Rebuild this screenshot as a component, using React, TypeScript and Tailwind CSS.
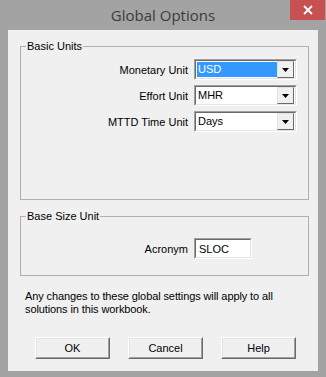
import React from 'react'

const font = { fontFamily: 'Tahoma, "Liberation Sans", Arial, sans-serif' }

function Combo({ value, selected }: { value: string; selected?: boolean }) {
  return (
    <div className="w-[103px] h-[21px] border border-t-[#a0a0a0] border-l-[#a0a0a0] border-b-white border-r-white">
      <div className="h-full flex items-center bg-white border border-t-[#696969] border-l-[#696969] border-b-[#e3e3e3] border-r-[#e3e3e3] pl-[1px] pr-[1px]">
        <div
          className={
            'flex-1 h-[15px] leading-[15px] pl-[1px] ' +
            (selected ? 'bg-[#3399ff] text-white' : 'text-black')
          }
        >
          {value}
        </div>
        <div className="w-[17px] h-[17px] flex items-center justify-center bg-[#f0f0f0] border border-t-[#e3e3e3] border-l-[#e3e3e3] border-b-[#696969] border-r-[#696969]">
          <svg width="7" height="4" viewBox="0 0 7 4">
            <path d="M0 0h7L3.5 4z" fill="#000" />
          </svg>
        </div>
      </div>
    </div>
  )
}

function Row({ label, children }: { label: string; children: React.ReactNode }) {
  return (
    <div className="flex items-center h-[21px]">
      <div className="w-[173px] text-right pr-[6px]">{label}</div>
      {children}
    </div>
  )
}

function Button({ label }: { label: string }) {
  return (
    <div className="w-[75px] h-[22px] border border-t-white border-l-white border-b-[#696969] border-r-[#696969]">
      <div className="h-full flex items-center justify-center bg-[#f0f0f0] border border-t-[#e3e3e3] border-l-[#e3e3e3] border-b-[#a0a0a0] border-r-[#a0a0a0] text-black">
        {label}
      </div>
    </div>
  )
}

export default function App() {
  return (
    <div className="w-[326px] h-[377px] bg-[#a3a3a3] flex flex-col relative" style={font}>
      {/* Title bar */}
      <div className="h-[30px] flex items-center justify-center">
        <span
          className="text-[15px] text-[#3c3c3c] leading-none"
          style={{ fontFamily: '"Segoe UI", "Open Sans", "Noto Sans", sans-serif' }}
        >
          Global Options
        </span>
      </div>
      <div className="absolute top-0 right-[1px] w-[35px] h-[20px] bg-[#c75050] flex items-center justify-center">
        <svg width="10" height="10" viewBox="0 0 10 10">
          <path d="M1 1L9 9M9 1L1 9" stroke="#fff" strokeWidth="1.8" />
        </svg>
      </div>

      {/* Client area */}
      <div className="mx-[8px] h-[341px] bg-[#f0f0f0] text-[11px] leading-[12px] text-black flex flex-col">
        <fieldset className="mt-[10px] ml-[12px] w-[289px] h-[160px] border border-[#b0b0b0] pl-[5px]">
          <legend className="px-[1px] leading-[12px]">Basic Units</legend>
          <div className="-ml-[5px] flex flex-col gap-[5px] pt-[7px]">
            <Row label="Monetary Unit">
              <Combo value="USD" selected />
            </Row>
            <Row label="Effort Unit">
              <Combo value="MHR" />
            </Row>
            <Row label="MTTD Time Unit">
              <Combo value="Days" />
            </Row>
          </div>
        </fieldset>

        <fieldset className="mt-[10px] ml-[12px] w-[289px] h-[66px] border border-[#b0b0b0] pl-[5px]">
          <legend className="px-[1px] leading-[12px]">Base Size Unit</legend>
          <div className="-ml-[5px] pt-[16px]">
            <Row label="Acronym">
              <div className="w-[58px] h-[21px] border border-t-[#a0a0a0] border-l-[#a0a0a0] border-b-white border-r-white">
                <div className="h-full flex items-center bg-white border border-t-[#696969] border-l-[#696969] border-b-[#e3e3e3] border-r-[#e3e3e3] pl-[3px]">
                  SLOC
                </div>
              </div>
            </Row>
          </div>
        </fieldset>

        <p className="mt-[14px] ml-[17px] leading-[13px] tracking-[-0.1px]">
          Any changes to these global settings will apply to all
          <br />
          solutions in this workbook.
        </p>

        <div className="mt-[21px] ml-[27px] flex gap-[18px]">
          <Button label="OK" />
          <Button label="Cancel" />
          <Button label="Help" />
        </div>
      </div>
    </div>
  )
}
